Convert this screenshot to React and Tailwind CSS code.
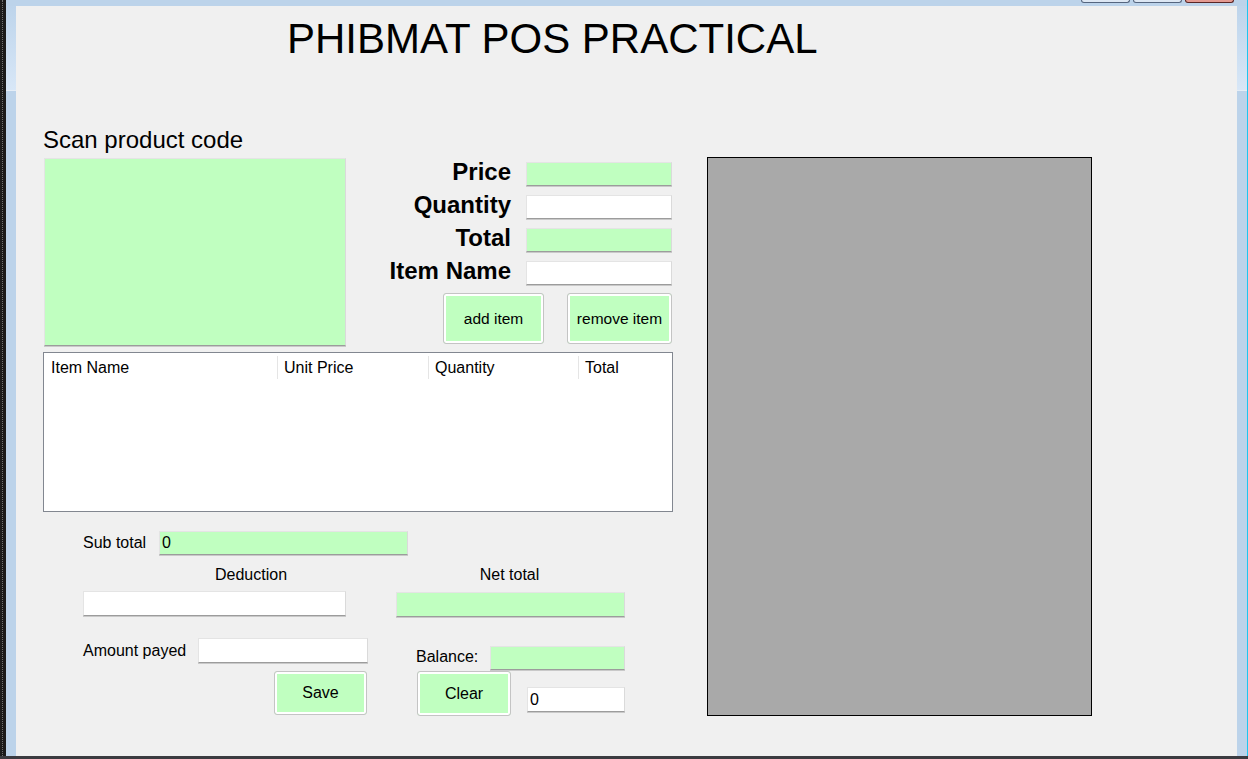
import React from "react";

// WinForms-ish text box
const Box = ({ green = false, value = "", className = "" }) => (
  <div
    className={`flex items-center border border-[#e4e4e4] border-b-[#9c9c9c] border-r-[#dadada] pl-[2px] text-[16px] leading-none shadow-[0_1px_0_#c9c9c9] ${
      green ? "bg-[#c0ffc0]" : "bg-white"
    } ${className}`}
  >
    {value}
  </div>
);

const GreenButton = ({ children, className = "" }) => (
  <button
    type="button"
    className={`flex items-center justify-center rounded-[3px] border border-[#c4c4c4] bg-[#c0ffc0] text-[15.5px] leading-none shadow-[inset_0_0_0_2px_#ffffff] ${className}`}
  >
    {children}
  </button>
);

const SideFrame = () => (
  <div className="flex w-[10px] flex-col">
    <div className="h-[84px] bg-gradient-to-b from-[#bdd4eb] to-[#d8e7f7]" />
    <div className="h-px bg-[#e4edf7]" />
    <div className="flex-1 bg-[#bcd3ea]" />
  </div>
);

export default function App() {
  return (
    <div className="h-[759px] w-[1248px] overflow-hidden bg-[#3b3b40] font-['Liberation_Sans',Arial,sans-serif] text-black">
      <div className="flex h-[756px]">
        {/* dark desktop edge */}
        <div className="flex w-[6px] bg-[#1b1b1b]">
          <div className="ml-[2px] h-full w-px border-l border-dotted border-[#707070]" />
        </div>

        {/* window */}
        <div className="flex flex-1 flex-col bg-[#bcd3ea]">
          <div className="flex h-[6px] justify-end gap-[3px] pr-[13px]">
            <div className="h-[3px] w-[49px] rounded-b-[3px] border-x border-b border-[#55657e] bg-[#dde7f3]" />
            <div className="h-[3px] w-[49px] rounded-b-[3px] border-x border-b border-[#55657e] bg-[#dde7f3]" />
            <div className="h-[3px] w-[49px] rounded-b-[3px] border-x border-b border-[#5a2626] bg-[#e49a92]" />
          </div>

          <div className="flex flex-1">
            <SideFrame />

            <main className="flex flex-1 flex-col bg-[#f0f0f0]">
              <h1 className="mt-[12px] pl-[271px] text-[42px] font-normal leading-[42px]">
                PHIBMAT POS PRACTICAL
              </h1>

              <div className="mt-[68px] flex items-start pl-[27px]">
                {/* left column */}
                <div className="flex w-[630px] flex-col">
                  <p className="text-[24px] leading-[24px]">Scan product code</p>

                  <div className="mt-[6px] flex h-[188px]">
                    <Box green className="ml-px h-[188px] w-[302px]" />

                    <div className="flex flex-1 flex-col items-end pr-px">
                      <div className="mt-[4px] grid grid-cols-[auto_146px] items-start gap-x-[15px] gap-y-[9px]">
                        <span className="text-right text-[24px] font-bold leading-[20px]">Price</span>
                        <Box green className="h-[24px]" />
                        <span className="text-right text-[24px] font-bold leading-[20px]">Quantity</span>
                        <Box className="h-[24px]" />
                        <span className="text-right text-[24px] font-bold leading-[20px]">Total</span>
                        <Box green className="h-[24px]" />
                        <span className="text-right text-[24px] font-bold leading-[20px]">Item Name</span>
                        <Box className="h-[24px]" />
                      </div>
                      <div className="mt-[8px] flex gap-[23px]">
                        <GreenButton className="h-[51px] w-[101px]">add item</GreenButton>
                        <GreenButton className="h-[51px] w-[105px]">remove item</GreenButton>
                      </div>
                    </div>
                  </div>

                  {/* list view */}
                  <div className="mt-[6px] h-[160px] w-[630px] border border-[#828790] bg-white">
                    <div className="flex h-[28px] py-[2px] pt-[3px] text-[16px] leading-none">
                      <div className="flex w-[234px] items-center border-r border-[#e5e5e5] pl-[7px]">Item Name</div>
                      <div className="flex w-[151px] items-center border-r border-[#e5e5e5] pl-[6px]">Unit Price</div>
                      <div className="flex w-[150px] items-center border-r border-[#e5e5e5] pl-[6px]">Quantity</div>
                      <div className="flex items-center pl-[6px]">Total</div>
                    </div>
                  </div>

                  {/* totals */}
                  <div className="mt-[19px] flex items-center text-[16px] leading-[16px]">
                    <span className="ml-[40px] w-[76px]">Sub total</span>
                    <Box green value="0" className="h-[24px] w-[249px]" />
                  </div>

                  <div className="mt-[12px] flex text-[16px] leading-[16px]">
                    <div className="ml-[40px] flex w-[263px] flex-col">
                      <span className="pl-[132px]">Deduction</span>
                      <Box className="mt-[8px] h-[25px]" />
                    </div>
                    <div className="ml-[50px] flex w-[229px] flex-col">
                      <span className="pr-[2px] text-center">Net total</span>
                      <Box green className="mt-[9px] h-[25px]" />
                    </div>
                  </div>

                  <div className="mt-[21px] flex items-start text-[16px] leading-[16px]">
                    <span className="ml-[40px] mt-[5px] w-[115px]">Amount payed</span>
                    <Box className="h-[25px] w-[170px]" />
                    <span className="ml-[48px] mt-[11px] w-[74px]">Balance:</span>
                    <Box green className="mt-[8px] h-[24px] w-[135px]" />
                  </div>

                  <div className="mt-px flex items-start">
                    <GreenButton className="ml-[231px] h-[44px] w-[93px] text-[16px]">Save</GreenButton>
                    <GreenButton className="ml-[50px] h-[45px] w-[94px] text-[16px]">Clear</GreenButton>
                    <Box value="0" className="ml-[16px] mt-[16px] h-[25px] w-[98px]" />
                  </div>
                </div>

                {/* preview panel */}
                <div className="ml-[34px] mt-[29px] h-[559px] w-[385px] border border-black bg-[#a9a9a9]" />
              </div>
            </main>

            <SideFrame />
          </div>
        </div>

        <div className="w-px bg-[#1cc6f0]" />
      </div>
    </div>
  );
}
